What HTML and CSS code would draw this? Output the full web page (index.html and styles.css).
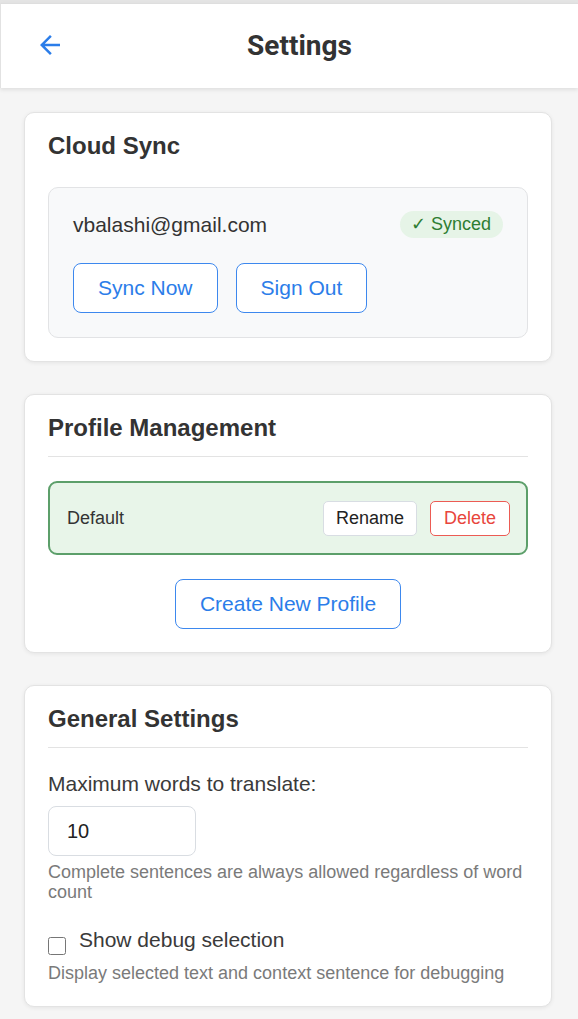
FILE: index.html
```html
<!DOCTYPE html>
<html lang="en">
<head>
<meta charset="utf-8">
<title>Settings</title>
<link rel="stylesheet" href="styles.css">
</head>
<body>
<div class="frame">
  <header class="topbar">
    <button class="back" aria-label="Back">
      <svg viewBox="0 0 24 24" width="30" height="30"><path d="M20 11H7.83l5.59-5.59L12 4l-8 8 8 8 1.41-1.41L7.83 13H20v-2z" fill="currentColor"/></svg>
    </button>
    <h1 class="page-title">Settings</h1>
  </header>

  <main class="content">
    <section class="card">
      <h2 class="card-title">Cloud Sync</h2>
      <div class="account-box">
        <div class="account-row">
          <span class="email">vbalashi@gmail.com</span>
          <span class="badge">✓ Synced</span>
        </div>
        <div class="btn-row">
          <button class="btn-outline">Sync Now</button>
          <button class="btn-outline">Sign Out</button>
        </div>
      </div>
    </section>

    <section class="card">
      <h2 class="card-title divided">Profile Management</h2>
      <div class="profile-row">
        <span class="profile-name">Default</span>
        <div class="profile-actions">
          <button class="btn-small">Rename</button>
          <button class="btn-small danger">Delete</button>
        </div>
      </div>
      <div class="center">
        <button class="btn-outline">Create New Profile</button>
      </div>
    </section>

    <section class="card">
      <h2 class="card-title divided">General Settings</h2>
      <label class="field-label" for="maxwords">Maximum words to translate:</label>
      <input class="num-input" id="maxwords" type="text" value="10">
      <p class="help">Complete sentences are always allowed regardless of word count</p>
      <div class="check-row">
        <input type="checkbox" id="debug" class="check">
        <label for="debug" class="check-label">Show debug selection</label>
      </div>
      <p class="help help-tight">Display selected text and context sentence for debugging</p>
    </section>
  </main>
</div>
</body>
</html>
```
FILE: styles.css
```css
* { box-sizing: border-box; }

html, body {
  margin: 0;
  padding: 0;
}

body {
  background: #f5f5f5;
  font-family: "Liberation Sans", Arial, sans-serif;
  color: #333;
}

.frame {
  border-top: 3px solid #e4e4e4;
  min-height: 1019px;
}

.topbar {
  height: 85px;
  background: #fff;
  border-top: 1px solid #dedede;
  border-left: 1px solid #e2e2e2;
  box-shadow: 0 2px 4px rgba(0, 0, 0, 0.09);
  display: flex;
  align-items: center;
  padding: 0 44px 0 34px;
  position: relative;
}

.back {
  width: 30px;
  height: 30px;
  padding: 0;
  border: none;
  background: none;
  color: #2b7de9;
  display: flex;
  margin-top: -2px;
}

.page-title {
  flex: 1;
  margin: 0;
  text-align: center;
  font-family: Roboto, "Liberation Sans", sans-serif;
  font-weight: 700;
  font-size: 28px;
  line-height: 32px;
  color: #333;
}

.content {
  padding: 24px 26px 0 24px;
  display: flex;
  flex-direction: column;
  gap: 32px;
}

.card {
  background: #fff;
  border: 1px solid #e3e3e3;
  border-radius: 10px;
  box-shadow: 0 1px 4px rgba(0, 0, 0, 0.07);
  padding: 19px 23px 23px;
}

.card-title {
  margin: 0 0 27px;
  font-size: 24px;
  line-height: 28px;
  font-weight: 700;
  color: #333;
}

.card-title.divided {
  padding-bottom: 14px;
  border-bottom: 1px solid #e3e3e3;
  margin-bottom: 24px;
}

.account-box {
  background: #f8f9fa;
  border: 1px solid #e2e3e5;
  border-radius: 10px;
  padding: 23px 24px 24px;
}

.account-row {
  display: flex;
  align-items: center;
  justify-content: space-between;
  height: 27px;
}

.email {
  font-size: 21px;
  line-height: 24px;
  color: #333;
}

.badge {
  background: #e6f4e7;
  color: #2e7d32;
  font-size: 18px;
  line-height: 27px;
  height: 27px;
  padding: 0 12px 0 11px;
  border-radius: 14px;
}

.btn-row {
  display: flex;
  gap: 18px;
  margin-top: 25px;
}

.btn-outline {
  height: 50px;
  padding: 0 24px;
  background: #fff;
  border: 1.5px solid #3d88ee;
  border-radius: 8px;
  color: #2b7de9;
  font-family: "Liberation Sans", Arial, sans-serif;
  font-size: 21px;
}

.profile-row {
  height: 74px;
  background: #e8f5e9;
  border: 2px solid #5c9f6a;
  border-radius: 9px;
  display: flex;
  align-items: center;
  justify-content: space-between;
  padding: 0 16px 0 17px;
}

.profile-name {
  font-size: 18px;
  color: #333;
}

.profile-actions {
  display: flex;
  gap: 13px;
}

.btn-small {
  height: 35px;
  padding: 0 12px;
  background: #fff;
  border: 1px solid #d8dde3;
  border-radius: 5px;
  color: #222;
  font-family: "Liberation Sans", Arial, sans-serif;
  font-size: 18px;
}

.btn-small.danger {
  border-color: #ec5b54;
  color: #e8453c;
  padding: 0 13px;
}

.center {
  display: flex;
  justify-content: center;
  margin-top: 24px;
}

.field-label {
  display: block;
  font-size: 21px;
  line-height: 24px;
  color: #3a3a3a;
}

.num-input {
  display: block;
  width: 148px;
  height: 50px;
  margin-top: 10px;
  padding: 0 18px;
  border: 1px solid #d9dde2;
  border-radius: 8px;
  font-family: "Liberation Sans", Arial, sans-serif;
  font-size: 20px;
  color: #222;
  background: #fff;
}

.help {
  margin: 6px 0 0;
  font-size: 18px;
  line-height: 20px;
  color: #7a7a7a;
}

.check-row {
  display: flex;
  align-items: flex-start;
  gap: 13px;
  margin-top: 26px;
}

.check {
  width: 18px;
  height: 18px;
  margin: 9px 0 0;
  flex: none;
}

.check-label {
  font-size: 21px;
  line-height: 24px;
  color: #3a3a3a;
}

.help-tight {
  margin-top: 8px;
}
```
